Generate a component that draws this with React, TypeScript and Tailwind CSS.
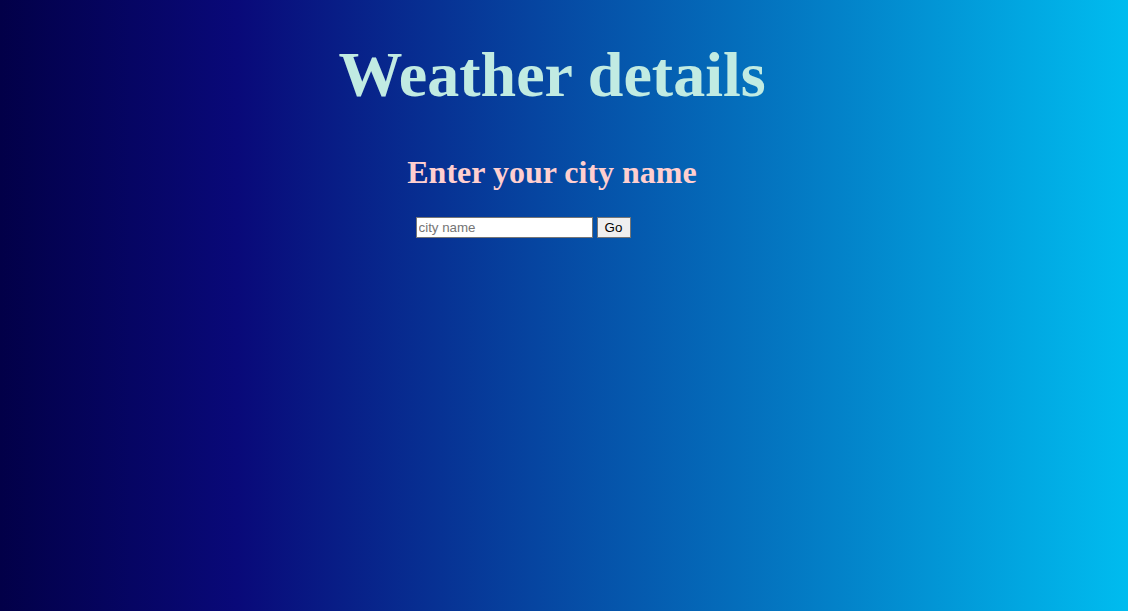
import React from 'react';

const App = () => {
  return (
    <div className="min-h-screen w-full bg-[linear-gradient(90deg,#020048_0%,#090979_21%,#00bcef_100%)] font-['Liberation_Serif',serif]">
      <div className="flex flex-col items-center pr-[24px] pt-[27px]">
        <h1 className="text-[64px] font-bold leading-normal text-[#c1ebe2]">
          Weather details
        </h1>
        <h2 className="mt-[25px] text-[32px] font-bold leading-normal text-[#ffcfcf]">
          Enter your city name
        </h2>
        <div className="mt-[21px] flex items-center gap-[4px] pr-[58px] font-['Liberation_Sans',Arial,sans-serif] text-[13.33px]">
          <input
            type="text"
            placeholder="city name"
            className="h-[21px] w-[177px] border border-[#767676] bg-white px-[2px] text-black placeholder:text-[#757575] outline-none"
          />
          <button className="h-[21px] w-[34px] border border-[#767676] bg-[#efefef] text-black">
            Go
          </button>
        </div>
      </div>
    </div>
  );
};

export default App;
